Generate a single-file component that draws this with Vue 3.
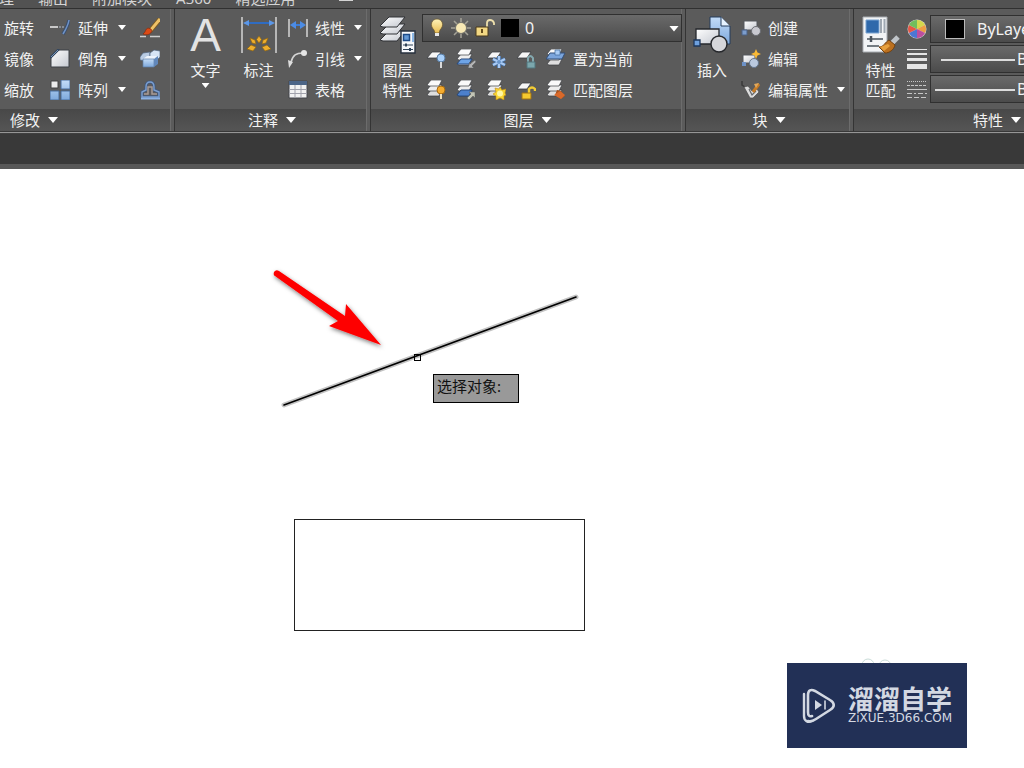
<script setup>
const tabs = [
  { label: '管理', cls: 'tab-first' },
  { label: '输出' },
  { label: '附加模块' },
  { label: 'A360' },
  { label: '精选应用' },
]
const modify = [
  { plain: '旋转', label: '延伸', icon: 'extend', side: 'brush', sideName: '删除' },
  { plain: '镜像', label: '倒角', icon: 'chamfer', side: 'cubes', sideName: '分解' },
  { plain: '缩放', label: '阵列', icon: 'array', side: 'offset', sideName: '偏移' },
]
const annotate = [
  { label: '线性', icon: 'linear', menu: true },
  { label: '引线', icon: 'leader', menu: true },
  { label: '表格', icon: 'table', menu: false },
]
const layerRows = [
  {
    label: '置为当前',
    icon: 'l-current',
    tools: [
      ['l-off', '关'], ['l-isolate', '隔离'], ['l-freeze', '冻结'], ['l-lock', '锁定'],
    ],
  },
  {
    label: '匹配图层',
    icon: 'l-match',
    tools: [
      ['l-on', '打开'], ['l-unisolate', '取消隔离'], ['l-thaw', '解冻'], ['l-unlock', '解锁'],
    ],
  },
]
const block = [
  { label: '创建', icon: 'b-create', menu: false },
  { label: '编辑', icon: 'b-edit', menu: false },
  { label: '编辑属性', icon: 'b-attr', menu: true },
]
</script>

<template>
  <div class="app">
    <svg class="sprite" aria-hidden="true">
      <defs>
        <linearGradient id="gWhite" x1="0" y1="0" x2="1" y2="1">
          <stop offset="0" stop-color="#ffffff" /><stop offset="1" stop-color="#c4c8d0" />
        </linearGradient>
        <linearGradient id="gBlue" x1="0" y1="0" x2="0" y2="1">
          <stop offset="0" stop-color="#c3dcf8" /><stop offset="1" stop-color="#7da8dc" />
        </linearGradient>
        <linearGradient id="gGold" x1="0" y1="0" x2="0" y2="1">
          <stop offset="0" stop-color="#fff3b8" /><stop offset="1" stop-color="#e9bd52" />
        </linearGradient>
      </defs>
      <symbol id="extend" viewBox="0 0 20 20">
        <path d="M0 9h8" stroke="#c8c8c8" stroke-width="2" /><path d="M9 9h5" stroke="#858b94" stroke-width="2" stroke-dasharray="2 1" />
        <path d="M19 2c-1 6-3 9-6 14" stroke="#3b4f6c" stroke-width="3.500" fill="none" /><path d="M19 2c-1 6-3 9-6 14" stroke="#6f93c8" stroke-width="1.500" fill="none" />
      </symbol>
      <symbol id="chamfer" viewBox="0 0 20 20">
        <path d="M1 18V9l8-8h10v17z" fill="url(#gWhite)" stroke="#3d4046" />
        <path d="M0 9 9 0" stroke="#34475f" stroke-width="2.400" /><path d="M1 8 8 1" stroke="#7896bb" />
      </symbol>
      <symbol id="array" viewBox="0 0 20 20">
        <path d="M1 1h7v7H1z" fill="#ececec" stroke="#454545" />
        <path d="M11 0h9v9h-9zM0 11h9v9H0zM11 11h9v9h-9z" fill="url(#gBlue)" stroke="#496c9c" />
      </symbol>
      <symbol id="brush" viewBox="0 0 20 20">
        <path d="M0 18.500h6M10 18.500h10" stroke="#cfcfcf" stroke-width="1.500" />
        <path d="M20 1 10 13" stroke="#7b5a20" stroke-width="4.800" /><path d="M20 1 10 13" stroke="#efc267" stroke-width="3" />
        <path d="m11 11-3-1c-3 1-2 4-5 6 4 2 8 0 9-3z" fill="#dc4a15" stroke="#842b10" stroke-width=".7" />
      </symbol>
      <symbol id="cubes" viewBox="0 0 20 20">
        <path d="m0 8 3-4 7-1v6l-4 3-6-1z" fill="#b9cce4" stroke="#50647e" stroke-width=".7" />
        <path d="m10 4 4-3 6 1v6l-3 3-7-1z" fill="#d8e5f5" stroke="#50647e" stroke-width=".7" />
        <path d="m3 10 4-3h10l-3 3z" fill="#eef4fc" /><path d="M3 10h11v8H3z" fill="url(#gBlue)" stroke="#607fa8" stroke-width=".7" /><path d="m14 10 4-3v8l-4 3z" fill="#6288bb" />
      </symbol>
      <symbol id="offset" viewBox="0 0 20 20">
        <path d="M2 17v-5l4-2V7q0-5 4-5t4 5v3l5 2v5z" fill="#5d5b5c" stroke="#3f587e" stroke-width="3" />
        <path d="M2 17v-5l4-2V7q0-5 4-5t4 5v3l5 2v5z" fill="none" stroke="#7c9fd0" stroke-width="1.400" />
        <path d="M4 14h4V7h4v7h5" fill="none" stroke="#a89c96" stroke-width="1.500" /><path d="M1 18.500h19" stroke="#8db2e4" stroke-width="2" />
      </symbol>
      <symbol id="dim" viewBox="0 0 36 36">
        <path d="M1 0v36M35 0v36" stroke="#cdcdcd" stroke-width="1.600" />
        <path d="M6 6h24" stroke="#2f6cc2" stroke-width="2" /><path d="m2 6 6-3v6zM34 6l-6-3v6z" fill="#5b97e8" />
        <g fill="#eeae2c" stroke="#8f6514" stroke-width=".7">
          <path d="m18 19 2.500 3.500-2.500 3.500-2.500-3.500z" /><path d="m9 21 5 2 1 4-4-1z" /><path d="m27 21-5 2-1 4 4-1z" />
          <path d="m6 32 4-4 5 2-3 4z" /><path d="m30 32-4-4-5 2 3 4z" />
        </g>
      </symbol>
      <symbol id="linear" viewBox="0 0 20 20">
        <path d="M1 1v18M19 1v18" stroke="#d6d6d6" stroke-width="1.500" /><path d="M5 7h10" stroke="#3d7dd8" stroke-width="2" />
        <path d="m2 7 6-4v8zM18 7l-6-4v8z" fill="#4c8ce5" />
      </symbol>
      <symbol id="leader" viewBox="0 0 20 20">
        <path d="M15 4C8 4 5 6 3 13" fill="none" stroke="#d4d4d4" stroke-width="1.700" /><circle cx="16" cy="4" r="3" fill="#e5e5e5" /><path d="M0 11l5 2-4 6z" fill="#dedede" />
      </symbol>
      <symbol id="table" viewBox="0 0 20 20">
        <path d="M1 1h18v17H1z" fill="#f2f2f2" stroke="#44474d" /><path d="M1 1h18v4H1z" fill="#4c6587" />
        <path d="M1 9.500h18M1 13.500h18M7 5v13M13 5v13" stroke="#a1a2ac" />
      </symbol>
      <symbol id="layers" viewBox="0 0 38 38">
        <g fill="url(#gWhite)" stroke="#303236" stroke-width="1">
          <path d="m1 24 9-9h16l-8 10H4z" /><path d="m1 17 9-9h16l-8 10H4z" /><path d="m1 10 9-9h16l-8 10H4z" />
        </g>
        <path d="M22 15h14v22H22z" fill="#f6f8fb" stroke="#27313e" stroke-width="1.400" />
        <path d="M24.500 18.500h6v6h-6z" fill="#6399d6" stroke="#1d4b88" stroke-width="1.500" /><path d="M34 17v9" stroke="#8bb7e6" stroke-width="2" />
        <path d="M24 29h10M24 33.500h10" stroke="#2f4359" /><path d="M27 27.500v3M31 32v3" stroke="#2f4359" stroke-width="2" />
      </symbol>
      <symbol id="sheet" viewBox="0 0 20 20"><path d="m1 9 5-6h9l-4 6z" fill="#f6f6f6" stroke="#3b3d42" stroke-width=".8" /></symbol>
      <symbol id="stack" viewBox="0 0 20 20">
        <path d="m1 15 4-5h11l-3 6H3z" fill="#dedede" stroke="#3a3c40" stroke-width=".7" />
        <path d="m1 10 4-5h11l-3 6H3z" fill="#eeeeee" stroke="#3a3c40" stroke-width=".7" />
        <path d="m1 5 4-5h11l-3 6H3z" fill="#fafafa" stroke="#3a3c40" stroke-width=".7" />
      </symbol>
      <symbol id="l-off" viewBox="0 0 20 20"><use href="#sheet" /><circle cx="15" cy="9" r="4" fill="#a9d0fa" stroke="#587da5" /><path d="M15 13v6" stroke="#dadada" stroke-width="2" /></symbol>
      <symbol id="l-on" viewBox="0 0 20 20"><use href="#stack" /><circle cx="15" cy="10" r="4" fill="#f5ac2e" stroke="#a76a10" /><path d="M15 14v5" stroke="#f0e0ba" stroke-width="2" /></symbol>
      <symbol id="l-isolate" viewBox="0 0 20 20"><use href="#stack" /><path d="m1 15 4-5h11l-3 5z" fill="#6ea4e6" stroke="#2a4c80" /><path d="m19 11-5 4v-2l-2 6h6l-2-2 4-4z" fill="#b5b5b5" stroke="#55585b" stroke-width=".5" /></symbol>
      <symbol id="l-unisolate" viewBox="0 0 20 20"><use href="#stack" /><path d="m1 15 4-5h11l-3 6H3z" fill="#4c80cc" stroke="#284a7c" /><path d="m11 18 4-4-2-2h6v6l-2-2-4 4z" fill="#c3c5b5" stroke="#55585b" stroke-width=".5" /></symbol>
      <symbol id="l-freeze" viewBox="0 0 20 20"><use href="#sheet" /><path d="M13 7v12M7 10l12 6M19 10 7 16" stroke="#446d9f" stroke-width="4" /><path d="M13 7v12M7 10l12 6M19 10 7 16" stroke="#a9cbf5" stroke-width="2.400" /><circle cx="13" cy="13" r="2" fill="#6997cc" /></symbol>
      <symbol id="l-thaw" viewBox="0 0 20 20"><use href="#stack" /><path d="m14 7 2 3 4-1-1 4 1 2-2 1v4l-4-2-4 2v-4l-3-2 3-2-1-4 4 1z" fill="#f9d531" stroke="#bc8810" stroke-width=".6" /><circle cx="14" cy="13.500" r="3" fill="#fff7a6" /></symbol>
      <symbol id="l-lock" viewBox="0 0 20 20"><use href="#sheet" /><path d="M12 13V9q2-4 5 0v4" fill="none" stroke="#83a8af" stroke-width="2" /><path d="M11 13h8v6h-8z" fill="#7ba7ad" stroke="#52777e" /></symbol>
      <symbol id="l-unlock" viewBox="0 0 20 20"><use href="#sheet" /><path d="M13 14V9q3-3 6 0v2" fill="none" stroke="#f2cc35" stroke-width="2.400" /><path d="M6 13h9v6H6z" fill="#f5c92f" stroke="#a17312" /></symbol>
      <symbol id="l-current" viewBox="0 0 20 20"><use href="#stack" /><path d="m0 10 4-6h15l-3 6z" fill="#7ba5dc" stroke="#334e78" /><path d="M9 1h5v5H9z" fill="#a9ccf5" stroke="#416a9e" stroke-width=".7" /></symbol>
      <symbol id="l-match" viewBox="0 0 20 20"><use href="#stack" /><path d="m11 10 4 1 4 5-4 3-6-4z" fill="#a9521d" /><path d="m8 15 6-4 5 4-4 4z" fill="#d9692a" /></symbol>
      <symbol id="insert" viewBox="0 0 38 38">
        <path d="M17 1h11l9 9v18H17z" fill="url(#gBlue)" stroke="#243d5c" /><path d="M28 1v9h9" fill="#e7f3ff" stroke="#243d5c" />
        <path d="M3 13h23v15H3z" fill="url(#gWhite)" stroke="#26282d" stroke-width="1.300" /><circle cx="26" cy="28" r="8" fill="#d5d6da" stroke="#25272b" stroke-width="1.400" />
        <path d="M1 24h6v6H1z" fill="#6ea1df" stroke="#1d375c" stroke-width="1.300" />
      </symbol>
      <symbol id="b-create" viewBox="0 0 20 20"><path d="M3 3h13v9H3z" fill="url(#gWhite)" stroke="#55585e" /><circle cx="15" cy="13" r="4.500" fill="#c8c9d0" stroke="#6c6e74" /><path d="M1 12h5v5H1z" fill="#7c9dcc" stroke="#4c6386" /></symbol>
      <symbol id="b-edit" viewBox="0 0 20 20"><path d="M2 6h12v8H2z" fill="url(#gWhite)" stroke="#55585e" /><circle cx="13" cy="14" r="4.500" fill="#bac9df" stroke="#64778f" /><path d="M1 13h4v4H1z" fill="#6d91c5" /><path d="m15 0 1.500 3.500L20 5l-3.500 1.500L15 10l-1.500-3.500L10 5l3.500-1.500z" fill="#f8b936" /></symbol>
      <symbol id="b-attr" viewBox="0 0 20 20"><path d="M1 1v4l3 2" fill="none" stroke="#3a3a3a" stroke-width="1.500" /><path d="m3 7 4-1 4 5 5-2 2 3-6 6H9z" fill="#dcdcdc" stroke="#4b4b4b" stroke-width=".7" /><path d="m8 9 3 6 4-4" stroke="#64676b" stroke-width="1.200" fill="none" /><path d="m18 4-6 8" stroke="#c67b25" stroke-width="3" /><path d="m13 4 5-1-3 5z" fill="#dfa75c" /></symbol>
      <symbol id="props" viewBox="0 0 38 38">
        <path d="M1 1h24v35H1z" fill="#f2f4f6" stroke="#a9adb2" /><path d="M4 4h13v13H4z" fill="#2f69ab" stroke="#7aa4d1" /><path d="M19 3v14M22.500 3v14" stroke="#9fa8b2" stroke-width="2" />
        <path d="M5 23h16M5 30h12" stroke="#4b545e" stroke-width="1.500" /><path d="M9 20v6" stroke="#4b545e" stroke-width="2.500" />
        <path d="m36 21-8 8" stroke="#bfc4c9" stroke-width="5" /><path d="m27 24 6 5c-1 5-6 8-10 8l-6-6c5 0 6-5 10-7z" fill="#bb701f" stroke="#724111" /><path d="m18 31 8-3 2 2-6 5z" fill="#e7a03f" />
      </symbol>
      <symbol id="wheel" viewBox="0 0 20 20">
        <circle cx="10" cy="10" r="9.500" fill="#d6d6d6" />
        <path d="M10 10V1a9 9 0 0 1 8 5z" fill="#d4d84c" /><path d="m10 10 8-4a9 9 0 0 1 0 8z" fill="#ee9e43" /><path d="m10 10 8 4a9 9 0 0 1-8 5z" fill="#bc4e9e" />
        <path d="M10 10v9a9 9 0 0 1-8-5z" fill="#4c76d3" /><path d="m10 10-8 4a9 9 0 0 1 0-8z" fill="#e65745" /><path d="M10 10 2 6a9 9 0 0 1 8-5z" fill="#71bd5c" />
      </symbol>
      <symbol id="weight" viewBox="0 0 20 20"><path d="M0 .5h20" stroke="#e5e5e5" /><path d="M0 5h20" stroke="#e5e5e5" stroke-width="2" /><path d="M0 10.500h20" stroke="#e5e5e5" stroke-width="3" /><path d="M0 17.500h20" stroke="#e5e5e5" stroke-width="5" /></symbol>
      <symbol id="ltype" viewBox="0 0 20 20"><g stroke="#c6c6c6"><path d="M0 2.500h20" stroke-dasharray="1 1" /><path d="M0 6.500h20" stroke-dasharray="3 1" /><path d="M0 10.500h20" /><path d="M0 14.500h20" stroke-dasharray="5 2 2 2" /><path d="M0 18.500h20" stroke-dasharray="5 2" /></g></symbol>
      <symbol id="bulb" viewBox="0 0 20 20"><path d="M7 12C2 7 5 1 10 1s8 6 3 11l-1 3H8z" fill="url(#gGold)" stroke="#6c582c" stroke-width=".7" /><path d="M8 15h4v3H8z" fill="#e7e7e7" /></symbol>
      <symbol id="sun" viewBox="0 0 20 20"><path d="M10 0v20M0 10h20M3 3l14 14M17 3 3 17" stroke="#a5a398" stroke-width="1.500" /><circle cx="10" cy="10" r="6" fill="#7b796f" /><circle cx="10" cy="10" r="5" fill="#f8e9b5" /></symbol>
      <symbol id="lock" viewBox="0 0 20 20"><path d="M12 9V5q0-3 3-3t4 3v2" fill="none" stroke="#eee0ac" stroke-width="1.800" /><path d="M1 9h12v9H1z" fill="#f3d883" stroke="#49391a" /><path d="M7 11v4" stroke="#654d1c" stroke-width="2" /></symbol>
    </svg>

    <nav class="tabs">
      <a v-for="t in tabs" :key="t.label" href="#" :class="t.cls">{{ t.label }}</a>
      <button class="tab-toggle" type="button" aria-label="最小化"></button>
    </nav>

    <div class="ribbon">
      <section class="panel modify">
        <div class="body">
          <div v-for="m in modify" :key="m.plain" class="row">
            <button type="button" class="tool plain">{{ m.plain }}</button>
            <button type="button" class="tool wide"><svg class="ic"><use :href="'#' + m.icon" /></svg><span>{{ m.label }}</span><i class="caret"></i></button>
            <button type="button" class="tool" :aria-label="m.sideName"><svg class="ic"><use :href="'#' + m.side" /></svg></button>
          </div>
        </div>
        <button type="button" class="title">修改<i class="caret big-caret"></i></button>
      </section>

      <section class="panel annotate">
        <div class="body split">
          <button type="button" class="large"><span class="letter">A</span><span>文字</span><i class="caret"></i></button>
          <button type="button" class="large"><svg class="lic"><use href="#dim" /></svg><span>标注</span></button>
          <div class="stack">
            <div v-for="a in annotate" :key="a.label" class="row">
              <button type="button" class="tool wide"><svg class="ic"><use :href="'#' + a.icon" /></svg><span>{{ a.label }}</span><i v-if="a.menu" class="caret"></i></button>
            </div>
          </div>
        </div>
        <button type="button" class="title">注释<i class="caret big-caret"></i></button>
      </section>

      <section class="panel layer">
        <div class="body split">
          <button type="button" class="large"><svg class="lic"><use href="#layers" /></svg><span>图层<br />特性</span></button>
          <div class="stack">
            <div class="row">
              <div class="combo layer-combo">
                <select aria-label="图层"><option>0</option></select>
                <div class="combo-icons">
                  <svg class="ic"><use href="#bulb" /></svg><svg class="ic"><use href="#sun" /></svg><svg class="ic"><use href="#lock" /></svg><i class="swatch"></i>
                </div>
                <i class="caret big-caret combo-caret"></i>
              </div>
            </div>
            <div v-for="r in layerRows" :key="r.label" class="row layer-tools">
              <button v-for="t in r.tools" :key="t[0]" type="button" class="tool" :aria-label="t[1]"><svg class="ic"><use :href="'#' + t[0]" /></svg></button>
              <button type="button" class="tool"><svg class="ic"><use :href="'#' + r.icon" /></svg><span>{{ r.label }}</span></button>
            </div>
          </div>
        </div>
        <button type="button" class="title">图层<i class="caret big-caret"></i></button>
      </section>

      <section class="panel block">
        <div class="body split">
          <button type="button" class="large"><svg class="lic"><use href="#insert" /></svg><span>插入</span></button>
          <div class="stack">
            <div v-for="b in block" :key="b.label" class="row">
              <button type="button" class="tool wide"><svg class="ic"><use :href="'#' + b.icon" /></svg><span>{{ b.label }}</span><i v-if="b.menu" class="caret"></i></button>
            </div>
          </div>
        </div>
        <button type="button" class="title">块<i class="caret big-caret"></i></button>
      </section>

      <section class="panel props">
        <div class="body split">
          <button type="button" class="large"><svg class="lic"><use href="#props" /></svg><span>特性<br />匹配</span></button>
          <div class="stack">
            <div class="prop-row">
              <svg class="ic"><use href="#wheel" /></svg>
              <div class="combo"><select class="color-select" aria-label="颜色"><option>ByLayer</option></select><i class="swatch framed"></i></div>
            </div>
            <div class="prop-row">
              <svg class="ic"><use href="#weight" /></svg>
              <div class="combo"><select class="line-select" aria-label="线宽"><option>ByLayer</option></select><i class="sample short"></i></div>
            </div>
            <div class="prop-row">
              <svg class="ic"><use href="#ltype" /></svg>
              <div class="combo"><select class="line-select" aria-label="线型"><option>ByLayer</option></select><i class="sample"></i></div>
            </div>
          </div>
        </div>
        <button type="button" class="title">特性<i class="caret big-caret"></i></button>
      </section>
    </div>

    <div class="filebar"></div>

    <main class="canvas">
      <svg class="drawing">
        <defs>
          <filter id="shade" x="-20%" y="-20%" width="140%" height="140%"><feDropShadow dx="1" dy="2" stdDeviation="2" flood-color="#000" flood-opacity=".5" /></filter>
        </defs>
        <path d="M284 236 576 128" stroke="#c2c2c2" stroke-width="5" stroke-linecap="round" />
        <path d="M284 236 576 128" stroke="#000" stroke-width="1.600" stroke-linecap="round" />
        <rect x="414.5" y="185.500" width="6" height="6" fill="none" stroke="#000" />
        <rect x="294.5" y="350.500" width="290" height="111" fill="none" stroke="#222" />
        <path d="M275 107 338 152l-9 5 52 19-35-41-1 12-66-45q-3-2-5 1-1 3 1 4z" fill="#fe0000" filter="url(#shade)" />
      </svg>
      <div class="prompt">选择对象:</div>
      <div class="mark">
        <svg class="halo" viewBox="0 0 34 5"><g fill="none" stroke="#c9dcd8"><circle cx="8" cy="7" r="6" /><circle cx="25" cy="8" r="6" /></g></svg>
        <svg class="logo" viewBox="0 0 34 36" fill="none" stroke="#d3d8e2" stroke-linecap="round">
          <path d="M2 6v22c0 5 4 7 8 5" stroke-width="2.400" />
          <path d="M10 28c-3 1-4-1-4-4V7c0-5 3-6 7-4l15 9c5 3 5 7 0 10L14 31c-3 2-5 3-8 2" stroke-width="2.600" />
          <path d="M13 12v10l7-5z" fill="#d3d8e2" stroke="none" /><path d="M23 13v8" stroke-width="1.600" />
        </svg>
        <div class="mark-text"><strong>溜溜自学</strong><span>ZiXUE.3D66.COM</span></div>
      </div>
    </main>
  </div>
</template>

<style>
body { margin: 0; background: #fff; }
</style>

<style scoped>
.app { display: flex; flex-direction: column; min-height: 100vh; overflow: hidden; font: 15px/20px "Noto Sans", "Noto Sans CJK SC", sans-serif; color: #f2f2f2; }
.sprite { position: absolute; width: 0; height: 0; }
button, select { font: inherit; color: inherit; border: 0; margin: 0; padding: 0; background: none; }
.tabs { display: flex; align-items: flex-end; gap: 24px; height: 8px; overflow: hidden; background: #525252; border-bottom: 1px solid #303030; }
.tabs a { flex: none; color: #d4d4d4; text-decoration: none; white-space: nowrap; }
.tab-first { margin-left: -16px; }
.tab-toggle { width: 14px; height: 20px; margin-left: 20px; background: linear-gradient(#d4d4d4, #d4d4d4) 0 11px / 14px 2px no-repeat; }
.ribbon { display: flex; overflow: hidden; background: #5b5b5b; border-bottom: 1px solid #969696; }
.panel { flex: none; display: flex; flex-direction: column; box-sizing: border-box; border-right: 1px solid #343434; box-shadow: inset -3px 0 #5b5b5b, inset -4px 0 #6c6c6c; border-bottom: 1px solid #383838; }
.modify { width: 175px; }
.annotate { width: 196px; }
.layer { width: 315px; }
.block { width: 168px; }
.props { width: 288px; }
.body { height: 97px; padding-top: 3px; }
.split { display: flex; }
.row { display: flex; align-items: center; height: 31px; }
.tool { display: flex; align-items: center; gap: 7px; white-space: nowrap; }
.wide { gap: 8px; }
.wide .caret { margin-left: 2px; }
.modify .row { padding-left: 4px; }
.plain { width: 46px; }
.modify .wide { width: 90px; }
.ic { flex: none; width: 20px; height: 20px; }
.lic { width: 38px; height: 38px; }
.caret { flex: none; width: 8px; height: 5px; background: #fff; clip-path: polygon(0 0, 100% 0, 50% 100%); }
.big-caret { width: 10px; height: 6px; }
.title { display: flex; align-items: center; justify-content: center; gap: 8px; height: 22px; margin-right: 4px; padding-left: 3px; background: linear-gradient(#484848, #555); }
.modify .title { justify-content: flex-start; padding-left: 10px; }
.large { display: flex; flex-direction: column; align-items: center; width: 53px; padding-top: 4px; }
.large > span:not(.letter) { margin-top: 6px; }
.annotate .large .lic { width: 36px; }
.annotate .body { padding-left: 4px; }
.layer .body { padding-left: 2px; }
.letter { height: 38px; font: 46px/38px "Liberation Sans", sans-serif; color: #e3e3e3; }
.large .caret { margin-top: 3px; }
.annotate .stack { padding-left: 3px; }
.annotate .wide { gap: 7px; }
.stack { min-width: 0; }
.layer .large { width: 49px; }
.layer .stack { flex: 1; padding-right: 3px; }
.layer-tools { gap: 10px; padding-left: 4px; }
.combo { position: relative; display: flex; height: 26px; border: 1px solid #303030; background: linear-gradient(#6a6a6a, #4b4b4b); }
.combo select { flex: 1; min-width: 0; appearance: none; outline: 0; font-size: 16px; }
.combo option { background: #4b4b4b; }
.layer-combo { flex: 1; }
.layer-combo select { padding-left: 102px; }
.combo-icons { position: absolute; inset: 0 auto 0 4px; display: flex; align-items: center; gap: 4px; pointer-events: none; }
.combo-icons .swatch { margin-left: 2px; }
.combo-caret { position: absolute; right: 2px; top: 11px; pointer-events: none; }
.swatch { width: 18px; height: 18px; background: #000; }
.framed { position: absolute; left: 14px; top: 3px; border: 1px solid #bbb; pointer-events: none; }
.block .large { width: 52px; }
.block .stack { padding-left: 3px; }
.block .wide { gap: 7px; }
.props .large { width: 53px; }
.props .stack { flex: 1; padding-top: 3px; }
.prop-row { display: flex; align-items: center; gap: 3px; margin-bottom: 2px; }
.prop-row .combo { flex: 1; }
.color-select { padding-left: 46px; }
.line-select { padding-left: 86px; }
.sample { position: absolute; left: 4px; top: 13px; width: 80px; height: 2px; background: #ddd; pointer-events: none; }
.short { left: 10px; width: 74px; }
.filebar { height: 30px; background: #393939; border-bottom: 5px solid #585858; border-top: 1px solid #404040; }
.canvas { position: relative; flex: 1; min-height: 480px; background: #fff; }
.drawing { display: block; position: absolute; inset: 0; width: 100%; height: 100%; }
.prompt { position: absolute; left: 433px; top: 205px; width: 80px; padding: 1px 1px 6px 3px; border: 1px solid #000; background: #999; color: #111; white-space: nowrap; }
.mark { position: absolute; right: 57px; bottom: 20px; display: flex; align-items: center; gap: 12px; box-sizing: border-box; width: 180px; height: 85px; padding-left: 15px; background: #223056; color: #d3d8e2; }
.halo { position: absolute; left: 73px; top: -5px; width: 34px; height: 5px; }
.logo { flex: none; width: 34px; height: 36px; }
.mark-text { display: flex; flex-direction: column; gap: 2px; white-space: nowrap; }
.mark-text strong { font: 700 26px/24px "Noto Sans CJK SC", sans-serif; }
.mark-text span { font: 12px/13px "DejaVu Sans", sans-serif; }
</style>
